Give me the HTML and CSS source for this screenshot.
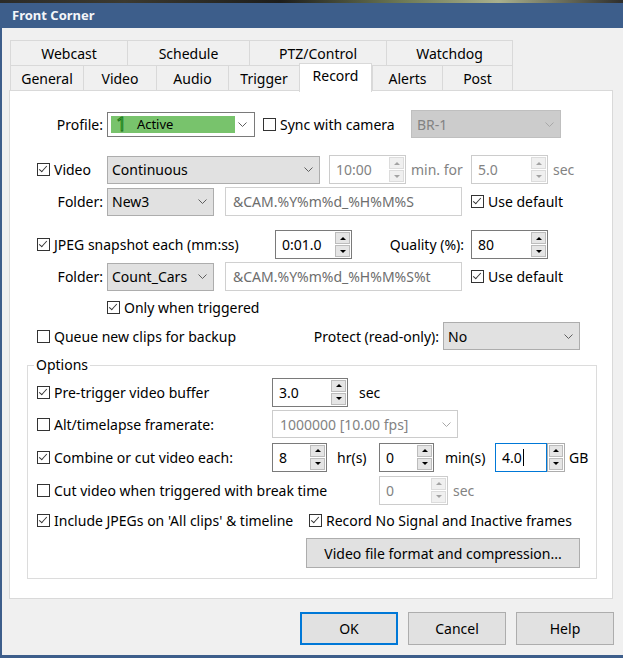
FILE: index.html
```html
<!DOCTYPE html>
<html>
<head>
  <meta charset="UTF-8">
  <title>Front Corner</title>
  <link rel="stylesheet" href="styles.css">
</head>
<body>
<div class="window">
  <div class="strip"></div>
  <div class="titlebar">Front Corner</div>

  <div class="client">
    <!-- tab strip: two rows, selected tab sits on the front row -->
    <div class="tabs">
      <div class="tabrow back">
        <div class="tab">Webcast</div>
        <div class="tab">Schedule</div>
        <div class="tab">PTZ/Control</div>
        <div class="tab">Watchdog</div>
      </div>
      <div class="tabrow front">
        <div class="tab">General</div>
        <div class="tab">Video</div>
        <div class="tab">Audio</div>
        <div class="tab">Trigger</div>
        <div class="tab sel">Record</div>
        <div class="tab">Alerts</div>
        <div class="tab">Post</div>
      </div>
    </div>

    <div class="panel">
      <div class="row r-profile">
        <span class="lbl">Profile:</span>
        <div class="profile">
          <div class="active"><span class="one">1</span>Active</div>
          <svg class="chev" viewBox="0 0 9 5"><path d="M.5 .5 4.5 4.5 8.5 .5"/></svg>
        </div>
        <label class="check sync"><span class="cb"></span>Sync with camera</label>
        <div class="combo off w-150">BR-1<svg class="chev" viewBox="0 0 9 5"><path d="M.5 .5 4.5 4.5 8.5 .5"/></svg></div>
      </div>

      <div class="row r-video">
        <label class="check w-70"><span class="cb on"></span>Video</label>
        <div class="combo w-213">Continuous<svg class="chev" viewBox="0 0 9 5"><path d="M.5 .5 4.5 4.5 8.5 .5"/></svg></div>
        <div class="spin off w-77 ml-9"><span class="val">10:00</span><span class="ud"><i class="up"></i><i class="dn"></i></span></div>
        <span class="dim minfor">min. for</span>
        <div class="spin off w-77"><span class="val">5.0</span><span class="ud"><i class="up"></i><i class="dn"></i></span></div>
        <span class="dim ml-5">sec</span>
      </div>

      <div class="row r-folder">
        <span class="lbl">Folder:</span>
        <div class="combo w-107">New3<svg class="chev" viewBox="0 0 9 5"><path d="M.5 .5 4.5 4.5 8.5 .5"/></svg></div>
        <div class="field">&amp;CAM.%Y%m%d_%H%M%S</div>
        <label class="check ml-9"><span class="cb on"></span>Use default</label>
      </div>

      <div class="row r-jpeg">
        <label class="check w-238"><span class="cb on"></span>JPEG snapshot each (mm:ss)</label>
        <div class="spin w-77"><span class="val">0:01.0</span><span class="ud"><i class="up"></i><i class="dn"></i></span></div>
        <span class="quality">Quality (%):</span>
        <div class="spin w-77"><span class="val">80</span><span class="ud"><i class="up"></i><i class="dn"></i></span></div>
      </div>

      <div class="row r-folder">
        <span class="lbl">Folder:</span>
        <div class="combo w-107">Count_Cars<svg class="chev" viewBox="0 0 9 5"><path d="M.5 .5 4.5 4.5 8.5 .5"/></svg></div>
        <div class="field">&amp;CAM.%Y%m%d_%H%M%S%t</div>
        <label class="check ml-9"><span class="cb on"></span>Use default</label>
      </div>

      <div class="row r-only">
        <label class="check ml-70"><span class="cb on"></span>Only when triggered</label>
      </div>

      <div class="row r-queue">
        <label class="check w-274"><span class="cb"></span>Queue new clips for backup</label>
        <span class="protect">Protect (read-only):</span>
        <div class="combo w-137">No<svg class="chev" viewBox="0 0 9 5"><path d="M.5 .5 4.5 4.5 8.5 .5"/></svg></div>
      </div>

      <fieldset class="group">
        <legend>Options</legend>

        <div class="row g-pre">
          <label class="check w-235"><span class="cb on"></span>Pre-trigger video buffer</label>
          <div class="spin w-76"><span class="val">3.0</span><span class="ud"><i class="up"></i><i class="dn"></i></span></div>
          <span class="ml-11">sec</span>
        </div>

        <div class="row g-alt">
          <label class="check w-235"><span class="cb"></span>Alt/timelapse framerate:</label>
          <div class="combo off light w-186">1000000 [10.00 fps]<svg class="chev" viewBox="0 0 9 5"><path d="M.5 .5 4.5 4.5 8.5 .5"/></svg></div>
        </div>

        <div class="row g-combine">
          <label class="check w-235"><span class="cb on"></span>Combine or cut video each:</label>
          <div class="spin w-55"><span class="val">8</span><span class="ud"><i class="up"></i><i class="dn"></i></span></div>
          <span class="hrs">hr(s)</span>
          <div class="spin w-55"><span class="val">0</span><span class="ud"><i class="up"></i><i class="dn"></i></span></div>
          <span class="mins">min(s)</span>
          <div class="spin focus w-70"><span class="val">4.0<span class="caret"></span></span><span class="ud"><i class="up"></i><i class="dn"></i></span></div>
          <span class="ml-4">GB</span>
        </div>

        <div class="row g-cut">
          <label class="check w-342"><span class="cb"></span>Cut video when triggered with break time</label>
          <div class="spin off w-69"><span class="val">0</span><span class="ud"><i class="up"></i><i class="dn"></i></span></div>
          <span class="dim ml-5">sec</span>
        </div>

        <div class="row g-include">
          <label class="check w-272"><span class="cb on"></span>Include JPEGs on 'All clips' &amp; timeline</label>
          <label class="check"><span class="cb on"></span>Record No Signal and Inactive frames</label>
        </div>

        <div class="row g-format">
          <button class="btn format">Video file format and compression...</button>
        </div>
      </fieldset>
    </div>

    <div class="footer">
      <button class="btn default">OK</button>
      <button class="btn">Cancel</button>
      <button class="btn">Help</button>
    </div>
  </div>
</div>
</body>
</html>
```

FILE: styles.css
```css
body {
  margin: 0;
  font-family: "Noto Sans", "Open Sans", sans-serif;
  font-size: 14px;
  color: #000;
  background: #f0f0f0;
}
.window {
  width: 623px;
  height: 658px;
  display: flex;
  flex-direction: column;
  overflow: hidden;
}
.strip {
  height: 3px;
  background: linear-gradient(90deg, #2b2b28, #3c3a30 20%, #1d1d1b 45%, #6f7b57 65%, #a9b08d 80%, #2e2e2c);
}
.titlebar {
  height: 25px;
  line-height: 24px;
  padding-left: 12px;
  background: #3d5e8b;
  color: #f4f6f9;
  font-weight: bold;
  font-size: 13px;
}
.client {
  flex: 1;
  border-left: 2px solid #3d5e8b;
  border-bottom: 3px solid #3d5e8b;
  padding: 12px 0 0 7px;
}

/* tabs */
.tabs {
  margin-left: 1px;
  width: 503px;
}
.tabrow {
  display: grid;
  grid-template-rows: 25px;
}
.tabrow.back {
  grid-template-columns: 117px 122px 137px 127px;
}
.tabrow.front {
  grid-template-columns: 73px 73px 72px 71px 73px 70px 71px;
}
.tab {
  border: 1px solid #d9d9d9;
  border-right: none;
  border-bottom: none;
  background: #f0f0f0;
  text-align: center;
  line-height: 25px;
}
.tab:last-child {
  border-right: 1px solid #d9d9d9;
}
.tab.sel {
  background: #fff;
  margin-top: -2px;
  height: 28px;
  line-height: 23px;
  border-right: 1px solid #d9d9d9;
  position: relative;
  z-index: 1;
}

/* page area */
.panel {
  width: 604px;
  height: 509px;
  box-sizing: border-box;
  border: 1px solid #d9d9d9;
  background: #fff;
  padding-top: 19px;
}
.row {
  display: flex;
  align-items: center;
  margin-left: 27px;
  white-space: nowrap;
}
.r-profile { height: 28px; }
.r-video { height: 29px; margin-top: 17px; }
.r-folder { height: 29px; margin-top: 3px; }
.r-jpeg { height: 29px; margin-top: 14px; }
.r-only { height: 28px; margin-top: 2px; }
.r-queue { height: 28px; margin-top: 1px; }

.lbl {
  width: 70px;
  padding-right: 4px;
  box-sizing: border-box;
  text-align: right;
}
.check {
  display: flex;
  align-items: center;
  flex: none;
}
.cb {
  width: 13px;
  height: 13px;
  box-sizing: border-box;
  border: 1px solid #333;
  background: #fff;
  margin-right: 4px;
  position: relative;
  flex: none;
}
.cb.on::after {
  content: "";
  position: absolute;
  left: 3px;
  top: 0px;
  width: 3px;
  height: 7px;
  border: solid #333;
  border-width: 0 1.1px 1.1px 0;
  transform: rotate(42deg);
}
.sync { margin-left: 8px; width: 148px; }
.dim { color: #838383; }

.w-55 { width: 55px; }
.w-69 { width: 69px; }
.w-70 { width: 70px; }
.w-76 { width: 76px; }
.w-77 { width: 77px; }
.w-107 { width: 107px; }
.w-137 { width: 137px; }
.w-150 { width: 150px; }
.w-186 { width: 186px; }
.w-213 { width: 213px; }
.w-235 { width: 235px; }
.w-238 { width: 238px; }
.w-272 { width: 272px; }
.w-274 { width: 274px; }
.w-342 { width: 342px; }
.ml-4 { margin-left: 4px; }
.ml-5 { margin-left: 5px; }
.ml-9 { margin-left: 9px; }
.ml-11 { margin-left: 11px; }
.ml-70 { margin-left: 70px; }

/* profile picker */
.profile {
  width: 148px;
  height: 25px;
  box-sizing: border-box;
  border: 1px solid #7a7a7a;
  background: #fff;
  display: flex;
  align-items: center;
  padding: 3px 7px 3px 3px;
  justify-content: space-between;
}
.active {
  width: 124px;
  height: 17px;
  background: #78c36c;
  display: flex;
  align-items: center;
  font-size: 13px;
}
.one {
  font-size: 19px;
  line-height: 17px;
  color: #45c93c;
  -webkit-text-stroke: 0.8px #1a6e1a;
  margin: 0 10px 0 5px;
}

/* combos */
.combo {
  height: 28px;
  box-sizing: border-box;
  border: 1px solid #adadad;
  background: #e1e1e1;
  display: flex;
  align-items: center;
  justify-content: space-between;
  padding: 0 6px 0 4px;
  flex: none;
}
.combo.off {
  background: #cccccc;
  border-color: #bfbfbf;
  color: #838383;
  padding-left: 5px;
}
.combo.off.light {
  background: #fff;
  border-color: #cccccc;
  padding-left: 7px;
}
.chev {
  width: 9px;
  height: 5px;
  fill: none;
  stroke: #5f5f5f;
  stroke-width: 1;
}
.off .chev {
  stroke: #a8a8a8;
}

/* text fields */
.field {
  width: 237px;
  height: 29px;
  box-sizing: border-box;
  margin-left: 11px;
  border: 1px solid #d0d0d0;
  color: #6d6d6d;
  padding-left: 7px;
  display: flex;
  align-items: center;
}

/* spin boxes */
.spin {
  display: flex;
  height: 29px;
  flex: none;
}
.spin .val {
  flex: 1;
  display: flex;
  align-items: center;
  padding-left: 6px;
  border: 1px solid #7a7a7a;
  border-right: none;
  background: #fff;
}
.spin .ud {
  width: 17px;
  box-sizing: border-box;
  border: 1px solid #7a7a7a;
  border-left: none;
  padding: 1px 1px 1px 0;
  display: flex;
  flex-direction: column;
  gap: 1px;
}
.spin .ud i {
  flex: 1;
  background: #e5e5e5;
  border: 1px solid #bcbcbc;
  display: flex;
  align-items: center;
  justify-content: center;
}
.spin .up::after,
.spin .dn::after {
  content: "";
  border-left: 3px solid transparent;
  border-right: 3px solid transparent;
}
.spin .up::after { border-bottom: 3px solid #000; }
.spin .dn::after { border-top: 3px solid #000; }
.spin.off .val {
  border-color: #cccccc;
  color: #838383;
}
.spin.off .ud {
  border-color: #cccccc;
}
.spin.off .ud i {
  background: #f0f0f0;
  border-color: #dcdcdc;
}
.spin.off .up::after { border-bottom-color: #a3a3a3; }
.spin.off .dn::after { border-top-color: #a3a3a3; }
.spin.focus .val {
  border: 1px solid #0078d7;
}
.spin.focus .ud {
  width: 18px;
  border: 1px solid #adadad;
  padding: 1px;
}
.caret {
  width: 1px;
  height: 17px;
  background: #000;
  margin-left: 1px;
}

.minfor {
  width: 65px;
  padding-left: 5px;
  box-sizing: border-box;
}
.quality {
  width: 119px;
  padding-right: 7px;
  box-sizing: border-box;
  text-align: right;
}
.protect {
  width: 132px;
  padding-right: 4px;
  box-sizing: border-box;
  text-align: right;
}
.hrs {
  width: 52px;
  padding-left: 10px;
  box-sizing: border-box;
}
.mins {
  width: 61px;
  padding-left: 11px;
  box-sizing: border-box;
}

/* options group */
.group {
  margin: 6px 0 0 17px;
  padding: 0;
  width: 570px;
  height: 223px;
  box-sizing: border-box;
  border: 1px solid #dcdcdc;
  min-width: 0;
}
.group legend {
  padding: 0 2px;
  margin-left: 6px;
  line-height: 18px;
}
.group .row {
  margin-left: 9px;
}
.g-pre { height: 30px; margin-top: 3px; }
.g-alt { height: 28px; margin-top: 3px; }
.g-combine { height: 30px; margin-top: 4px; }
.g-cut { height: 30px; margin-top: 3px; }
.g-include { height: 26px; margin-top: 2px; }
.g-format { height: 30px; margin-top: 5px; justify-content: flex-end; padding-right: 16px; }

/* buttons */
.btn {
  font-family: inherit;
  font-size: 14px;
  color: #000;
  background: #e1e1e1;
  border: 1px solid #adadad;
  padding: 0;
}
.format {
  width: 274px;
  height: 30px;
}
.footer {
  display: flex;
  justify-content: flex-end;
  gap: 10px;
  padding: 13px 9px 0 0;
}
.footer .btn {
  width: 98px;
  height: 33px;
}
.footer .default {
  border: 2px solid #0078d7;
}
```
